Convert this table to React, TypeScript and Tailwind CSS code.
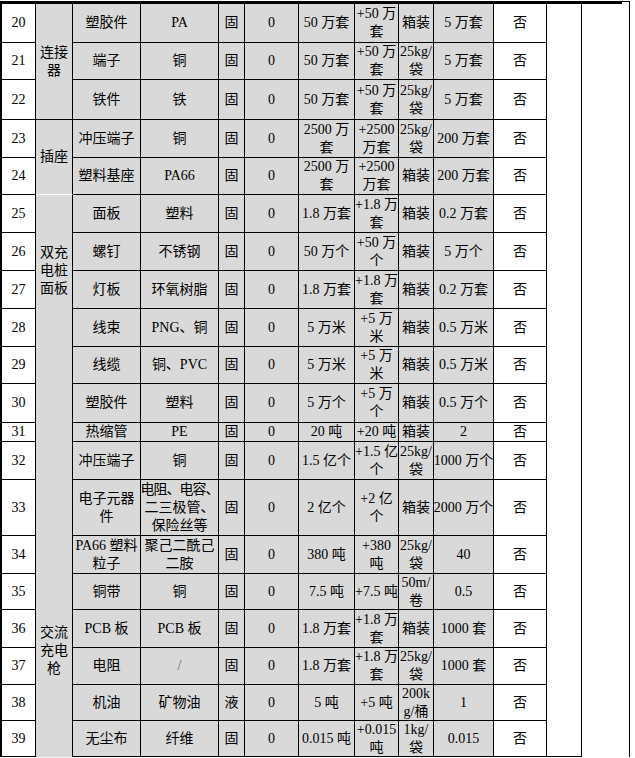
import React from "react";

type Row = {
  no: number;
  name: React.ReactNode;
  mat: React.ReactNode;
  state: string;
  amount: string;
  inc: string;
  pack: string;
  store: string;
};

const rows: Row[] = [
  { no: 20, name: "塑胶件", mat: "PA", state: "固", amount: "50 万套", inc: "+50 万\n套", pack: "箱装", store: "5 万套" },
  { no: 21, name: "端子", mat: "铜", state: "固", amount: "50 万套", inc: "+50 万\n套", pack: "25kg/\n袋", store: "5 万套" },
  { no: 22, name: "铁件", mat: "铁", state: "固", amount: "50 万套", inc: "+50 万\n套", pack: "25kg/\n袋", store: "5 万套" },
  { no: 23, name: "冲压端子", mat: "铜", state: "固", amount: "2500 万\n套", inc: "+2500\n万套", pack: "25kg/\n袋", store: "200 万套" },
  { no: 24, name: "塑料基座", mat: "PA66", state: "固", amount: "2500 万\n套", inc: "+2500\n万套", pack: "箱装", store: "200 万套" },
  { no: 25, name: "面板", mat: "塑料", state: "固", amount: "1.8 万套", inc: "+1.8 万\n套", pack: "箱装", store: "0.2 万套" },
  { no: 26, name: "螺钉", mat: "不锈钢", state: "固", amount: "50 万个", inc: "+50 万\n个", pack: "箱装", store: "5 万个" },
  { no: 27, name: "灯板", mat: "环氧树脂", state: "固", amount: "1.8 万套", inc: "+1.8 万\n套", pack: "箱装", store: "0.2 万套" },
  { no: 28, name: "线束", mat: "PNG、铜", state: "固", amount: "5 万米", inc: "+5 万\n米", pack: "箱装", store: "0.5 万米" },
  { no: 29, name: "线缆", mat: "铜、PVC", state: "固", amount: "5 万米", inc: "+5 万\n米", pack: "箱装", store: "0.5 万米" },
  { no: 30, name: "塑胶件", mat: "塑料", state: "固", amount: "5 万个", inc: "+5 万\n个", pack: "箱装", store: "0.5 万个" },
  { no: 31, name: "热缩管", mat: "PE", state: "固", amount: "20 吨", inc: "+20 吨", pack: "箱装", store: "2" },
  { no: 32, name: "冲压端子", mat: "铜", state: "固", amount: "1.5 亿个", inc: "+1.5 亿\n个", pack: "25kg/\n袋", store: "1000 万个" },
  {
    no: 33,
    name: "电子元器\n件",
    mat: (
      <>
        <span className="tracking-[-1px]">电阻、电容、</span>
        {"\n二三极管、\n保险丝等"}
      </>
    ),
    state: "固",
    amount: "2 亿个",
    inc: "+2 亿\n个",
    pack: "箱装",
    store: "2000 万个",
  },
  { no: 34, name: "PA66 塑料\n粒子", mat: "聚己二酰己\n二胺", state: "固", amount: "380 吨", inc: "+380\n吨", pack: "25kg/\n袋", store: "40" },
  { no: 35, name: "铜带", mat: "铜", state: "固", amount: "7.5 吨", inc: "+7.5 吨", pack: "50m/\n卷", store: "0.5" },
  { no: 36, name: "PCB 板", mat: "PCB 板", state: "固", amount: "1.8 万套", inc: "+1.8 万\n套", pack: "箱装", store: "1000 套" },
  { no: 37, name: "电阻", mat: <span className="text-[#666]">/</span>, state: "固", amount: "1.8 万套", inc: "+1.8 万\n套", pack: "25kg/\n袋", store: "1000 套" },
  { no: 38, name: "机油", mat: "矿物油", state: "液", amount: "5 吨", inc: "+5 吨", pack: "200k\ng/桶", store: "1" },
  { no: 39, name: "无尘布", mat: "纤维", state: "固", amount: "0.015 吨", inc: "+0.015\n吨", pack: "1kg/\n袋", store: "0.015" },
];

const base = "flex items-center justify-center text-center whitespace-pre border-r border-b border-black";
const grey = "bg-[#d9d9d9]";

export default function App() {
  return (
    <div className="w-[635px] h-[758px] overflow-hidden bg-white pt-px text-black text-[14px] leading-[18px] font-['Liberation_Serif','Noto_Sans_CJK_SC',serif]">
      <div className="grid w-[630px] grid-cols-[36px_37px_68px_78px_26px_54px_56px_44px_35px_60px_53px_35px_48px] grid-rows-[42px_37px_40px_38px_37px_38px_38px_38px_38px_37px_39px_19px_38px_56px_38px_36px_38px_37px_36px_36px]">
        {rows.map((r, i) => {
          const top = i === 0 ? "border-t-[3px]" : "";
          const g = [base, grey, top].join(" ");
          return (
            <React.Fragment key={r.no}>
              <div className={[base, "border-l-2 bg-white", top].join(" ")}>{r.no}</div>
              {i === 0 && (
                <div className={[base, grey, "row-span-3", top].join(" ")}>{"连接\n器"}</div>
              )}
              {i === 3 && (
                <div className="row-span-2 flex items-center justify-center text-center border-r border-b border-r-black border-b-white bg-[#d9d9d9]">
                  插座
                </div>
              )}
              {i === 5 && (
                <div className="row-span-4 flex items-center justify-center text-center whitespace-pre border-r border-black bg-[#d9d9d9]">
                  {"双充\n电桩\n面板"}
                </div>
              )}
              {i === 9 && (
                <div className="row-span-11 block text-center whitespace-pre border-r border-black bg-[#d9d9d9] pt-[277px]">
                  {"交流\n充电\n枪"}
                </div>
              )}
              <div className={g}><div>{r.name}</div></div>
              <div className={g}><div>{r.mat}</div></div>
              <div className={g}>{r.state}</div>
              <div className={g}>0</div>
              <div className={g}>{r.amount}</div>
              <div className={g}>{r.inc}</div>
              <div className={g}>{r.pack}</div>
              <div className={g}>{r.store}</div>
              <div className={[base, "bg-white", top].join(" ")}>否</div>
              {i === 0 && (
                <>
                  <div className="row-span-20 border-r border-b border-t-[3px] border-black bg-white" />
                  <div className="row-span-20 border-r border-t border-black bg-white">
                    <div className="h-[2px] w-[40px] bg-black" />
                  </div>
                </>
              )}
            </React.Fragment>
          );
        })}
      </div>
    </div>
  );
}
